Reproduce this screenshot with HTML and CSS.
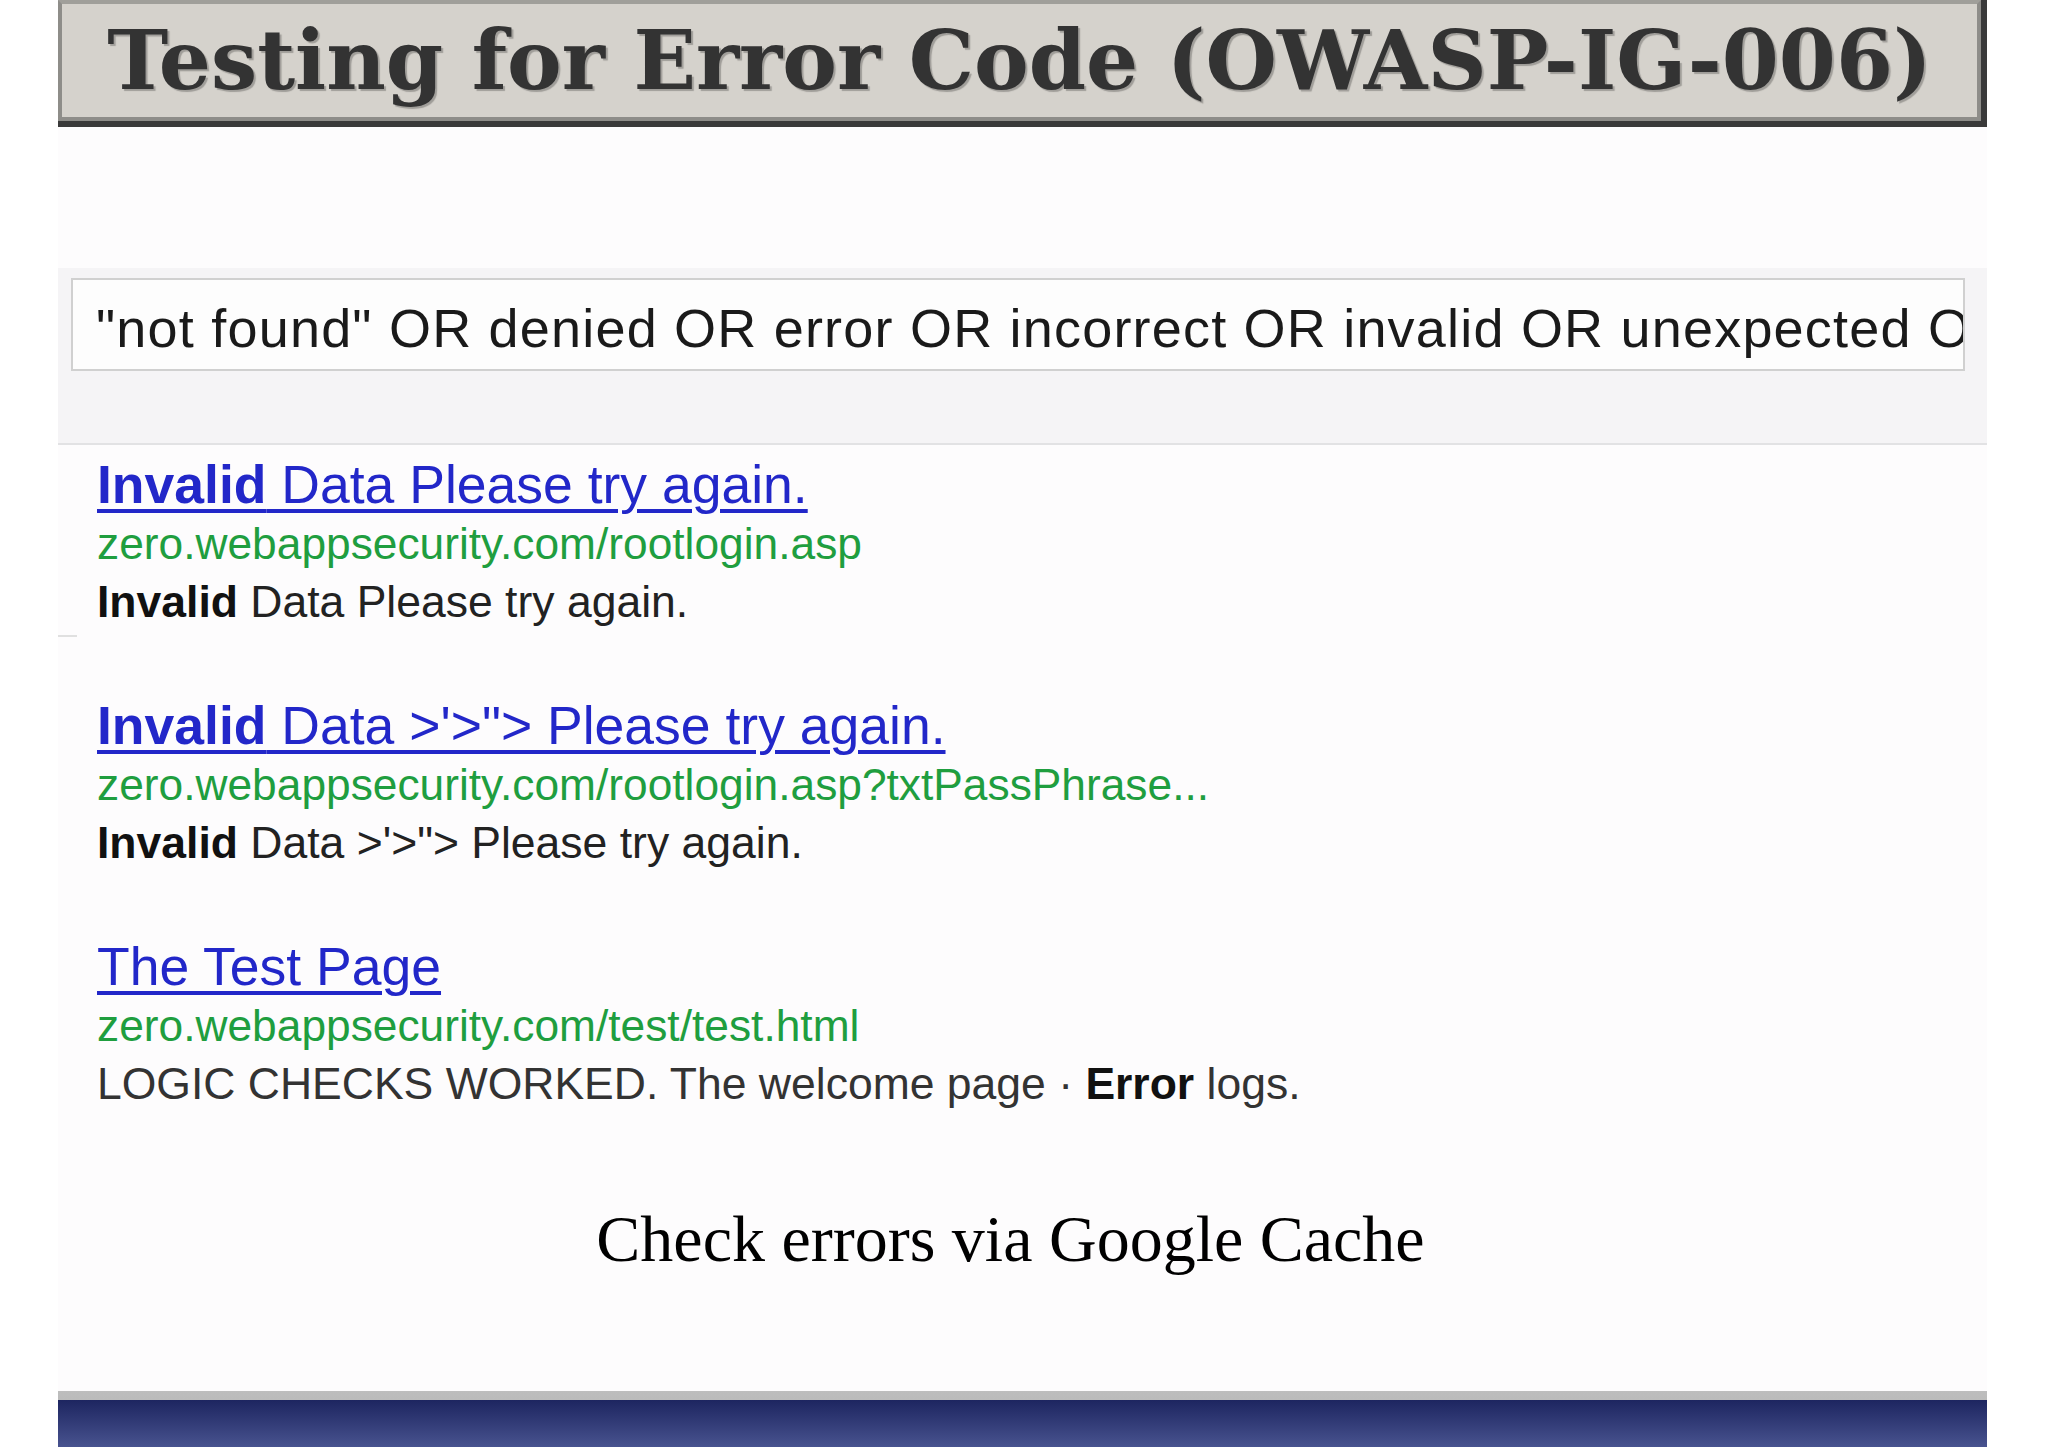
FILE: index.html
```html
<!DOCTYPE html>
<html lang="en">
<head>
  <meta charset="UTF-8">
  <title>Testing for Error Code (OWASP-IG-006)</title>
  <link rel="stylesheet" href="styles.css">
</head>
<body>

  <div class="slide">
    <div class="title-frame">
      <h1 class="title">Testing for Error Code (OWASP-IG-006)</h1>
    </div>

    <div class="search-band">
      <div class="search-box">"not found" OR denied OR error OR incorrect OR invalid OR unexpected OR failure</div>
    </div>

    <div class="results">
      <div class="result">
        <a class="result-title" href="#"><b>Invalid</b> Data Please try again.</a>
        <div class="result-url">zero.webappsecurity.com/rootlogin.asp</div>
        <div class="result-snippet"><b>Invalid</b> Data Please try again.</div>
      </div>

      <div class="sep"></div>

      <div class="result">
        <a class="result-title" href="#"><b>Invalid</b> Data &gt;'&gt;"&gt; Please try again.</a>
        <div class="result-url">zero.webappsecurity.com/rootlogin.asp?txtPassPhrase...</div>
        <div class="result-snippet"><b>Invalid</b> Data &gt;'&gt;"&gt; Please try again.</div>
      </div>

      <div class="result">
        <a class="result-title" href="#">The Test Page</a>
        <div class="result-url">zero.webappsecurity.com/test/test.html</div>
        <div class="result-snippet muted">LOGIC CHECKS WORKED. The welcome page · <b>Error</b> logs.</div>
      </div>
    </div>

    <p class="caption">Check errors via Google Cache</p>

    <div class="footer-bar"></div>
  </div>

</body>
</html>
```

FILE: styles.css
```css
body {
  margin: 0;
  background-color: #fff;
  font-family: 'Liberation Sans', Arial, sans-serif;
}

.slide {
  width: 1929px;
  height: 1447px;
  margin-left: 58px;
  background-color: #fdfcfd;
  display: flex;
  flex-direction: column;
}

/* Heading box with the dark drop edge */
.title-frame {
  border-right: 6px solid #3a3a3a;
  border-bottom: 6px solid #3a3a3a;
}

.title {
  margin: 0;
  height: 113px;
  border: 4px solid #8e8d89;
  border-top-color: #a09f9a;
  background-color: #d5d2cc;
  color: #333;
  font-family: 'DejaVu Serif', serif;
  font-weight: bold;
  font-size: 82px;
  line-height: 113px;
  text-align: center;
  white-space: nowrap;
  text-shadow: 2px 2px 1px rgba(0, 0, 0, 0.25);
}

/* Google search field */
.search-band {
  margin-top: 141px;
  padding: 10px 22px 72px 13px;
  background-color: #f5f4f6;
  border-bottom: 2px solid #e2e2e4;
}

.search-box {
  height: 80px;
  padding: 9px 0 0 23px;
  border: 2px solid #d0d0d0;
  background-color: #fdfdfd;
  color: #1a1a1a;
  font-size: 54px;
  letter-spacing: 1.2px;
  line-height: 79px;
  white-space: nowrap;
  overflow: hidden;
}

/* Results */
.results {
  padding: 10px 0 0 39px;
}

.result + .result {
  margin-top: 65px;
}

.result-title {
  display: inline-block;
  color: #2227c9;
  font-size: 53.5px;
  line-height: 60px;
  text-decoration: underline;
  text-decoration-thickness: 4px;
  text-underline-offset: 6px;
}

.result-url {
  color: #1f9e3f;
  font-size: 44.3px;
  line-height: 57px;
}

.result-snippet {
  color: #222;
  font-size: 44.5px;
  line-height: 59px;
}

.result-snippet.muted {
  color: #333;
}

.result-snippet b {
  color: #111;
}

.sep {
  width: 19px;
  height: 2px;
  margin: 4px 0 59px -39px;
  background-color: #e0e0e0;
}

.caption {
  margin: 86px 0 0;
  padding-right: 24px;
  color: #000;
  font-family: 'Liberation Serif', 'Times New Roman', serif;
  font-size: 66px;
  line-height: 80px;
  text-align: center;
}

.footer-bar {
  margin-top: auto;
  height: 47px;
  border-width: 9px 0 0;
  border-style: solid;
  border-image: linear-gradient(#bdbdbd, #3c3c3c) 1;
  background: linear-gradient(#1d2560, #48538f);
}
```
